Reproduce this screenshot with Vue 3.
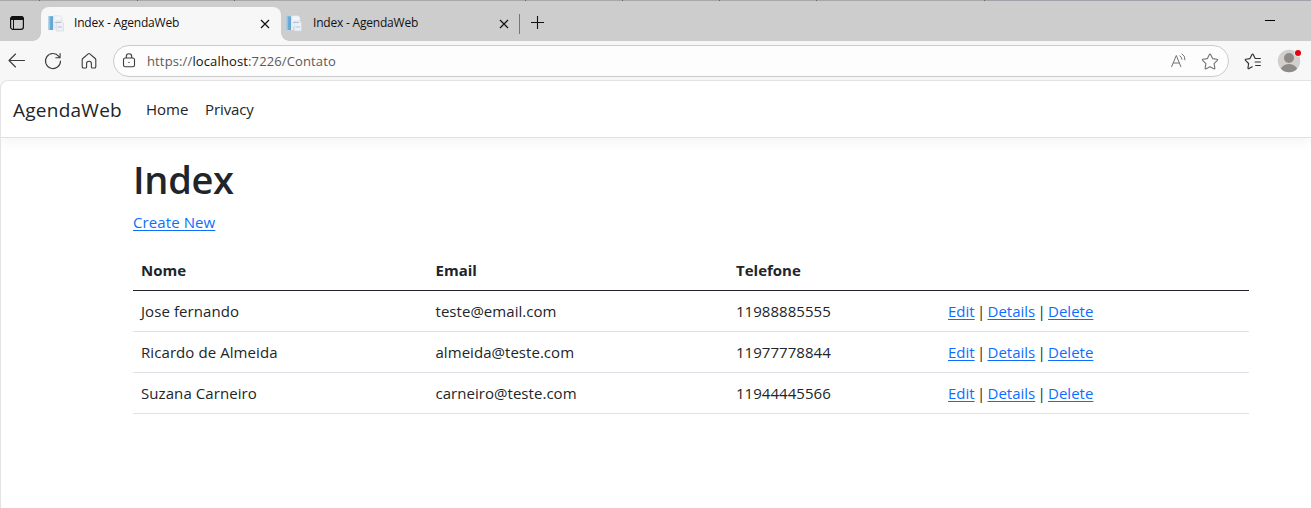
<script setup>
const tabs = [
  { title: 'Index - AgendaWeb', active: true },
  { title: 'Index - AgendaWeb', active: false },
]
const contacts = [
  { name: 'Jose fernando', email: 'teste@email.com', phone: '11988885555' },
  { name: 'Ricardo de Almeida', email: 'almeida@teste.com', phone: '11977778844' },
  { name: 'Suzana Carneiro', email: 'carneiro@teste.com', phone: '11944445566' },
]
</script>

<template>
  <div class="window">
    <div class="tabstrip">
      <svg class="edge" width="1311" height="1" viewBox="0 0 1311 1">
        <path d="M0 .5H985" stroke="#a8a8a8" />
        <path d="M985 .5H1311" stroke="#a2a2ad" />
        <path d="M39 .5h1M137 .5h1M234 .5h1M525 .5h1M622 .5h1M719 .5h1M816 .5h1M984 .5h1" stroke="#666" />
      </svg>
      <svg class="workspace" width="16" height="16" viewBox="0 0 16 16" fill="none" stroke="#111">
        <rect x="1.6" y="1.6" width="12.8" height="12.8" rx="2.4" stroke-width="1.2" />
        <path d="M1.6 4.500V4a2.4 2.4 0 0 1 2.4-2.4h8A2.4 2.4 0 0 1 14.400 4v.5z" fill="#111" />
        <path d="M4.500 5v9.400" />
      </svg>
      <div v-for="(tab, i) in tabs" :key="i" class="tab" :class="{ active: tab.active }">
        <svg class="favicon" width="16" height="17" viewBox="0 0 16 17">
          <path d="M.5 1h7v14h-7z" fill="#e3eef7" />
          <path d="M.7 1.200h4.300V15H.7z" fill="#62a7d5" />
          <path d="M.7 1.200h1.500V15H.7z" fill="#92c4e4" />
          <path d="M6 .8h6.500L14 2.500V12H6z" fill="#f3f5f8" stroke="#d4dbe4" stroke-width=".6" />
          <path d="M8.200 6h5.500L15.500 8v8H8.200z" fill="#edf0f5" stroke="#ccd3dd" stroke-width=".6" />
          <path d="M7 7.500h6M9.500 12h4.500" stroke="#b7c1cf" stroke-width="1.200" />
        </svg>
        <span class="tab-title">{{ tab.title }}</span>
        <svg class="close" width="10" height="10" viewBox="0 0 10 10" stroke="#111" stroke-width="1.200">
          <path d="M1 1l8 8M9 1L1 9" />
        </svg>
      </div>
      <span class="tab-divider"></span>
      <svg class="plus" width="15" height="15" viewBox="0 0 15 15" stroke="#111" stroke-width="1.100">
        <path d="M7.500 1v13M1 7.500h13" />
      </svg>
      <span class="minimize"></span>
    </div>

    <div class="toolbar">
      <svg class="back" width="18" height="16" viewBox="0 0 18 16" fill="none" stroke="#3b3b3b" stroke-width="1.100">
        <path d="M7.500 1L1 7.500 7.500 14M1 7.500H16.500" stroke-linecap="round" stroke-linejoin="round" />
      </svg>
      <svg class="reload" width="18" height="18" viewBox="0 0 18 18" fill="none" stroke="#3b3b3b" stroke-width="1.100">
        <path d="M16.500 9A7.500 7.500 0 1 1 14.800 4.300L16 5.600M16.100 1.500V5.700H11.800" stroke-linecap="round" stroke-linejoin="round" />
      </svg>
      <svg class="home" width="16" height="18" viewBox="0 0 16 18" fill="none" stroke="#3b3b3b" stroke-width="1.100">
        <path d="M1.200 7.800Q1.200 7 1.800 6.500L7.200 1.800Q8 1.100 8.800 1.800L14.200 6.500Q14.800 7 14.800 7.800V14.700Q14.800 16 13.500 16H11.500Q10.400 16 10.400 14.900V11.500Q10.400 9.300 8 9.300T5.600 11.500V14.900Q5.600 16 4.500 16H2.500Q1.200 16 1.200 14.700Z" />
      </svg>
      <div class="address">
        <svg class="lock" width="14" height="15" viewBox="0 0 14 15" fill="none" stroke="#3b3b3b" stroke-width="1.100">
          <rect x="1.500" y="5" width="11" height="8.700" rx="1.800" />
          <path d="M4.300 5V3.500a2.700 2.700 0 0 1 5.400 0V5" />
          <circle cx="7" cy="9.400" r=".7" fill="#3b3b3b" stroke="none" />
        </svg>
        <span class="url">https://<b>localhost</b>:7226/Contato</span>
        <svg class="read" width="17" height="16" viewBox="0 0 17 16" fill="none" stroke="#737373">
          <path d="M1.500 14L6.300 2.500 11 14M3.100 10H9.400" />
          <path d="M10 2.800Q11.800 4 12 6.300M12 .9Q15.200 2.800 15 6.800" stroke-linecap="round" />
        </svg>
        <svg class="star" width="18" height="17" viewBox="0 0 18 17" fill="none" stroke="#737373" stroke-width="1.100">
          <path d="M8.400 1.400Q9 .5 9.600 1.400L11.600 5.600 16.100 6.300Q17 6.600 16.400 7.400L13.100 10.600 13.900 15.100Q13.900 16.200 12.900 15.800L9 13.700 5.100 15.800Q4.100 16.200 4.100 15.100L4.900 10.600 1.600 7.400Q1 6.600 1.900 6.300L6.400 5.600Z" stroke-linejoin="round" />
        </svg>
      </div>
      <svg class="favorites" width="18" height="17" viewBox="0 0 18 17" fill="none" stroke="#303030" stroke-width="1.150">
        <path d="M12.500 5.500H11.200L9.200 1.500Q8.600.6 8 1.500L6 5.600 1.800 6.200Q.8 6.500 1.500 7.300L4.600 10.500 4 15Q4 16 5 15.600L8.200 13.800" stroke-linecap="round" stroke-linejoin="round" />
        <path d="M11.200 5.500H16.800M10.700 9H16.800M11.200 12.500H16.800" />
      </svg>
      <svg class="profile" width="26" height="26" viewBox="0 0 26 26">
        <defs><clipPath id="avatar"><circle cx="12" cy="14" r="11.200" /></clipPath></defs>
        <g clip-path="url(#avatar)">
          <rect width="26" height="26" fill="#d2d0ce" />
          <circle cx="12" cy="11" r="5" fill="#8e8a87" />
          <ellipse cx="12" cy="23.500" rx="8.500" ry="6.500" fill="#8e8a87" />
        </g>
        <circle cx="21" cy="6" r="3.500" fill="#f7f7f7" />
        <circle cx="21" cy="6" r="3" fill="#e60012" />
      </svg>
    </div>

    <div class="page">
      <header class="navbar">
        <a class="brand">AgendaWeb</a>
        <a class="nav-home">Home</a>
        <a class="nav-privacy">Privacy</a>
      </header>
      <main>
        <h1>Index</h1>
        <p><a class="link create">Create New</a></p>
        <table>
          <colgroup><col class="c1" /><col class="c2" /><col class="c3" /><col /></colgroup>
          <thead>
            <tr><th>Nome</th><th>Email</th><th>Telefone</th><th></th></tr>
          </thead>
          <tbody>
            <tr v-for="c in contacts" :key="c.phone">
              <td class="name">{{ c.name }}</td>
              <td class="email">{{ c.email }}</td>
              <td class="phone">{{ c.phone }}</td>
              <td class="actions"><a class="link">Edit</a> | <a class="link">Details</a> | <a class="link">Delete</a></td>
            </tr>
          </tbody>
        </table>
      </main>
    </div>
  </div>
</template>

<style>
body {
  overflow: hidden;
  background: #f7f7f7;
}
</style>

<style scoped>
* { box-sizing: border-box; }
svg { display: block; flex: none; }
.window {
  height: 508px;
  display: flex;
  flex-direction: column;
  overflow: hidden;
  background: #f7f7f7;
  font-family: "Open Sans", "Noto Sans", sans-serif;
  color: #212529;
}
.tabstrip {
  position: relative;
  flex: none;
  height: 41px;
  padding-top: 1px;
  display: flex;
  align-items: flex-start;
  background: #cdcdcd;
}
.edge { position: absolute; top: 0; left: 0; }
.workspace { margin: 14px 15px 0 9px; }
.tab {
  width: 240px;
  height: 34px;
  margin-top: 6px;
  padding-left: 7px;
  display: flex;
  align-items: center;
  border-radius: 8px 8px 0 0;
  position: relative;
}
.tab + .tab { width: 238px; padding-left: 5px; }
.tab.active { background: #f7f7f7; margin-left: 1px; }
.tab.active::before,
.tab.active::after {
  content: "";
  position: absolute;
  bottom: 0;
  width: 8px;
  height: 8px;
}
.tab.active::before {
  left: -8px;
  background: radial-gradient(circle at 0 0, #cdcdcd 7.5px, #f7f7f7 8px);
}
.tab.active::after {
  right: -8px;
  background: radial-gradient(circle at 100% 0, #cdcdcd 7.5px, #f7f7f7 8px);
}
.tab-title {
  margin: -2px 0 0 10px;
  width: 186px;
  font-size: 12px;
  line-height: 16px;
  letter-spacing: -0.2px;
  color: #111;
  white-space: nowrap;
}
.favicon { margin-top: -1px; }
.tab + .tab .tab-title { margin-left: 11px; }
.tab-divider {
  width: 1px;
  height: 20px;
  margin-top: 13px;
  background: #777;
}
.plus { margin: 14px 0 0 10px; }
.minimize {
  width: 10px;
  height: 1px;
  margin: 19px 36px 0 auto;
  background: #000;
}
.toolbar {
  flex: none;
  height: 39px;
  padding-top: 1px;
  display: flex;
  align-items: center;
}
.back { margin-left: 8px; }
.reload { margin-left: 18px; }
.home { margin-left: 19px; }
.address {
  width: 1116px;
  height: 32px;
  margin-left: 16px;
  padding: 0 9px 0 8px;
  display: flex;
  align-items: center;
  border: 1px solid #cbcbcb;
  border-radius: 16px;
  background: #fdfdfd;
}
.lock { margin-top: -2px; }
.url {
  margin-left: 11px;
  font-size: 13px;
  line-height: 18px;
  letter-spacing: 0.13px;
  color: #5a5a5a;
}
.url b { font-weight: 400; color: #111; }
.read { margin-left: auto; }
.star { margin-left: 14px; }
.favorites { margin-left: 15px; }
.profile { margin: -2px 0 0 15px; }
.page {
  flex: 1;
  border: 1px solid #e3e3e3;
  border-width: 1px 0 0 1px;
  border-top-left-radius: 8px;
  background: #fff;
  overflow: hidden;
}
.navbar {
  height: 57px;
  padding-left: 12px;
  display: flex;
  align-items: center;
  border-bottom: 1px solid #dee2e6;
  box-shadow: 0 4px 12px rgba(0, 0, 0, 0.05);
}
.brand { font-size: 19px; line-height: 30px; letter-spacing: 0.25px; width: 133px; padding-top: 1px; }
.nav-home { font-size: 15px; width: 59px; }
.nav-privacy { font-size: 15px; letter-spacing: -0.1px; }
main {
  width: 1116px;
  margin-left: 132px;
  padding-top: 17px;
}
h1 {
  margin: 0 0 7px;
  font-size: 38px;
  line-height: 48px;
  letter-spacing: -0.3px;
  font-weight: 600;
}
p { margin: 0 0 16px; font-size: 15px; line-height: 24px; }
.create { letter-spacing: 0.1px; }
.link {
  color: #0d6efd;
  text-decoration: underline;
  text-underline-offset: 2px;
  text-decoration-thickness: 1px;
  text-decoration-skip-ink: none;
}
table {
  width: 100%;
  table-layout: fixed;
  border-collapse: separate;
  border-spacing: 0;
  font-size: 15px;
  line-height: 24px;
}
.c1 { width: 294.500px; }
.c2 { width: 300.500px; }
.c3 { width: 212px; }
th, td {
  height: 41px;
  padding: 8px;
  text-align: left;
  border-bottom: 1px solid #dee2e6;
}
th { border-bottom-color: #212529; font-weight: 700; }
.name { letter-spacing: 0.08px; }
.email { letter-spacing: 0.04px; }
.phone { letter-spacing: 0.04px; }
.actions { word-spacing: -1.6px; }
</style>
